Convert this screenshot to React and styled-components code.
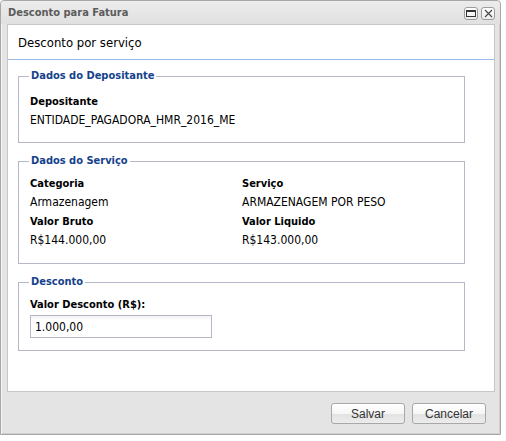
import React from 'react'
import styled, { createGlobalStyle } from 'styled-components'

const GlobalStyle = createGlobalStyle`
  body {
    margin: 0;
    background: #fff;
    font-family: "DejaVu Sans Condensed", "Liberation Sans", sans-serif;
  }
`

const Window = styled.div`
  box-sizing: border-box;
  width: 501px;
  height: 435px;
  border: 1px solid #a7a7a7;
  border-radius: 4px 4px 0 0;
  background: #e4e4e4;
  display: flex;
  flex-direction: column;
  box-shadow: inset 1px 1px 0 #f4f4f4, inset -1px -1px 0 #cfcfcf;
`

const TitleBar = styled.div`
  height: 23px;
  display: flex;
  align-items: center;
  justify-content: space-between;
  padding: 0 5px 0 7px;
  background: linear-gradient(#ececec, #e0e0e0);
  border-radius: 4px 4px 0 0;
`

const Title = styled.span`
  font-size: 11px;
  font-weight: bold;
  color: #5b5b5b;
`

const Tools = styled.div`
  display: flex;
  gap: 3px;
  padding-top: 2px;
`

const Tool = styled.div`
  box-sizing: border-box;
  width: 14px;
  height: 13px;
  border: 1px solid #9c9c9c;
  border-radius: 3px;
  background: linear-gradient(#ffffff, #ececec);
  display: flex;
  align-items: center;
  justify-content: center;
`

const Panel = styled.div`
  flex: 1;
  margin: 0 5px 0 6px;
  background: #fff;
  border: 1px solid #c6c6c6;
  display: flex;
  flex-direction: column;
`

const PanelHeader = styled.div`
  height: 34px;
  display: flex;
  align-items: center;
  padding-left: 10px;
  font-size: 13px;
  color: #000;
  border-bottom: 1px solid #99bbe8;
`

const PanelBody = styled.div`
  padding: 9px 29px 0 10px;
  display: flex;
  flex-direction: column;
  gap: 11px;
`

const Group = styled.fieldset`
  margin: 0;
  border: 1px solid #b5b8c8;
  padding: ${p => p.$top || 6}px 11px ${p => p.$bottom || 10}px;
`

const Legend = styled.legend`
  padding: 0 2px;
  margin-left: -1px;
  font-size: 11px;
  line-height: 14px;
  font-weight: bold;
  color: #15428b;
`

const Grid = styled.div`
  display: grid;
  grid-template-columns: 212px 1fr;
`

const Label = styled.div`
  font-size: 11px;
  line-height: 19px;
  font-weight: bold;
  color: #000;
`

const Value = styled.div`
  font-size: 12px;
  line-height: 19px;
  color: #000;
`

const Input = styled.input`
  box-sizing: border-box;
  display: block;
  width: 182px;
  height: 23px;
  margin-top: 1px;
  padding: 0 4px;
  border: 1px solid #b5b8c8;
  background: linear-gradient(#f2f2f2, #fff 4px);
  font-family: "DejaVu Sans Condensed", "Liberation Sans", sans-serif;
  font-size: 12px;
  color: #000;
  outline: none;
`

const Footer = styled.div`
  height: 41px;
  display: flex;
  align-items: center;
  justify-content: flex-end;
  gap: 7px;
  padding-right: 14px;
  padding-top: 1px;
`

const Button = styled.button`
  box-sizing: border-box;
  width: ${p => p.$w}px;
  height: 21px;
  border: 1px solid #a8a8a8;
  border-radius: 3px;
  background: linear-gradient(#ffffff 0%, #f6f6f6 50%, #e2e2e2 51%, #ececec 100%);
  font-family: "Liberation Sans", Arial, sans-serif;
  font-size: 12px;
  color: #333;
  padding: 0;
`

export default function App() {
  return (
    <>
      <GlobalStyle />
      <Window>
        <TitleBar>
          <Title>Desconto para Fatura</Title>
          <Tools>
            <Tool>
              <svg width="10" height="7" viewBox="0 0 10 7">
                <rect x="0.5" y="0.5" width="9" height="6" fill="none" stroke="#333" />
                <rect x="0" y="0" width="10" height="2" fill="#333" />
              </svg>
            </Tool>
            <Tool>
              <svg width="9" height="9" viewBox="0 0 9 9">
                <path d="M1 1 L8 8 M8 1 L1 8" stroke="#444" strokeWidth="1.1" />
              </svg>
            </Tool>
          </Tools>
        </TitleBar>
        <Panel>
          <PanelHeader>Desconto por serviço</PanelHeader>
          <PanelBody>
            <Group $top={9} $bottom={12}>
              <Legend>Dados do Depositante</Legend>
              <Label>Depositante</Label>
              <Value>ENTIDADE_PAGADORA_HMR_2016_ME</Value>
            </Group>
            <Group $top={6} $bottom={13}>
              <Legend>Dados do Serviço</Legend>
              <Grid>
                <Label>Categoria</Label>
                <Label>Serviço</Label>
                <Value>Armazenagem</Value>
                <Value>ARMAZENAGEM POR PESO</Value>
                <Label>Valor Bruto</Label>
                <Label>Valor Liquido</Label>
                <Value>R$144.000,00</Value>
                <Value>R$143.000,00</Value>
              </Grid>
            </Group>
            <Group $top={6} $bottom={12}>
              <Legend>Desconto</Legend>
              <Label>Valor Desconto (R$):</Label>
              <Input defaultValue="1.000,00" />
            </Group>
          </PanelBody>
        </Panel>
        <Footer>
          <Button $w={74}>Salvar</Button>
          <Button $w={74}>Cancelar</Button>
        </Footer>
      </Window>
    </>
  )
}
